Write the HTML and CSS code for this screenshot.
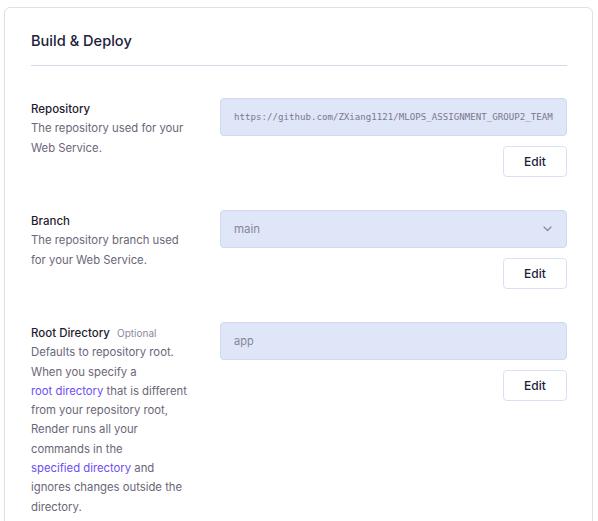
FILE: index.html
```html
<!DOCTYPE html>
<html lang="en">
<head>
<meta charset="utf-8">
<title>Build &amp; Deploy</title>
<link rel="stylesheet" href="styles.css">
</head>
<body>
<section class="card">
  <h2 class="card-title">Build &amp; Deploy</h2>
  <div class="rows">
    <div class="row">
      <div class="info">
        <div class="label">Repository</div>
        <p class="desc">The repository used for your Web Service.</p>
      </div>
      <div class="control">
        <div class="field mono">https://github.com/ZXiang1121/MLOPS_ASSIGNMENT_GROUP2_TEAM</div>
        <button class="btn">Edit</button>
      </div>
    </div>
    <div class="row">
      <div class="info">
        <div class="label">Branch</div>
        <p class="desc">The repository branch used for your Web Service.</p>
      </div>
      <div class="control">
        <div class="field select">
          <span>main</span>
          <svg class="chev" width="9" height="6" viewBox="0 0 9 6"><path d="M1 1l3.5 3.5L8 1" fill="none" stroke="#8b8799" stroke-width="1.2" stroke-linecap="round" stroke-linejoin="round"/></svg>
        </div>
        <button class="btn">Edit</button>
      </div>
    </div>
    <div class="row">
      <div class="info">
        <div class="label">Root Directory <span class="opt">Optional</span></div>
        <p class="desc">Defaults to repository root. When you specify a <a class="link" href="#">root directory</a> that is different from your repository root, Render runs all your commands in the <a class="link" href="#">specified directory</a> and ignores changes outside the directory.</p>
      </div>
      <div class="control">
        <div class="field">app</div>
        <button class="btn">Edit</button>
      </div>
    </div>
  </div>
</section>
</body>
</html>
```

FILE: styles.css
```css
* { box-sizing: border-box; }
html, body { margin: 0; padding: 0; background: #fff; }
body { font-family: Inter, "Noto Sans", sans-serif; color: #1f1d2e; }

.card {
  margin: 7px 0 0 4px;
  width: 589px;
  min-height: 600px;
  border: 1px solid #dde1ec;
  border-radius: 6px;
  padding: 0 25px 0 26px;
}

.card-title {
  margin: 0;
  padding: 22px 0 13px;
  font-size: 14.6px;
  font-weight: 500;
  line-height: 22px;
  color: #22203a;
  border-bottom: 1px solid #d5dae7;
}

.rows {
  display: flex;
  flex-direction: column;
  gap: 33px;
  padding-top: 32px;
}

.row {
  display: grid;
  grid-template-columns: 160px minmax(0, 1fr);
  column-gap: 29px;
  align-items: start;
}

.info { padding-top: 2px; }

.label {
  font-size: 11.5px;
  font-weight: 500;
  line-height: 19.2px;
  color: #1f1d2e;
}

.opt {
  font-size: 10px;
  font-weight: 400;
  color: #8c889b;
  margin-left: 4px;
}

.desc {
  margin: 0;
  font-size: 11.3px;
  line-height: 19.3px;
  color: #6b6677;
}

.link {
  color: #6c4ef2;
  text-decoration: none;
  white-space: nowrap;
}

.control {
  display: flex;
  flex-direction: column;
  align-items: flex-end;
  gap: 10px;
  min-width: 0;
}

.field {
  width: 100%;
  height: 38px;
  display: flex;
  align-items: center;
  padding: 0 13px;
  background: #dfe6f8;
  border: 1px solid #cfd9f1;
  border-radius: 4px;
  font-size: 11px;
  color: #8a8598;
  overflow: hidden;
  white-space: nowrap;
}

.field.mono {
  font-family: "DejaVu Sans Mono", "Liberation Mono", monospace;
  font-size: 9.15px;
  color: #7b7790;
}

.field.select {
  justify-content: space-between;
  font-size: 11.5px;
}

.chev { margin-right: 1px; }

.btn {
  width: 64px;
  height: 31px;
  background: #fff;
  border: 1px solid #d9e1f3;
  border-radius: 4px;
  font-family: Inter, "Noto Sans", sans-serif;
  font-size: 12px;
  font-weight: 500;
  color: #1e1c3a;
  padding: 0;
}
```
